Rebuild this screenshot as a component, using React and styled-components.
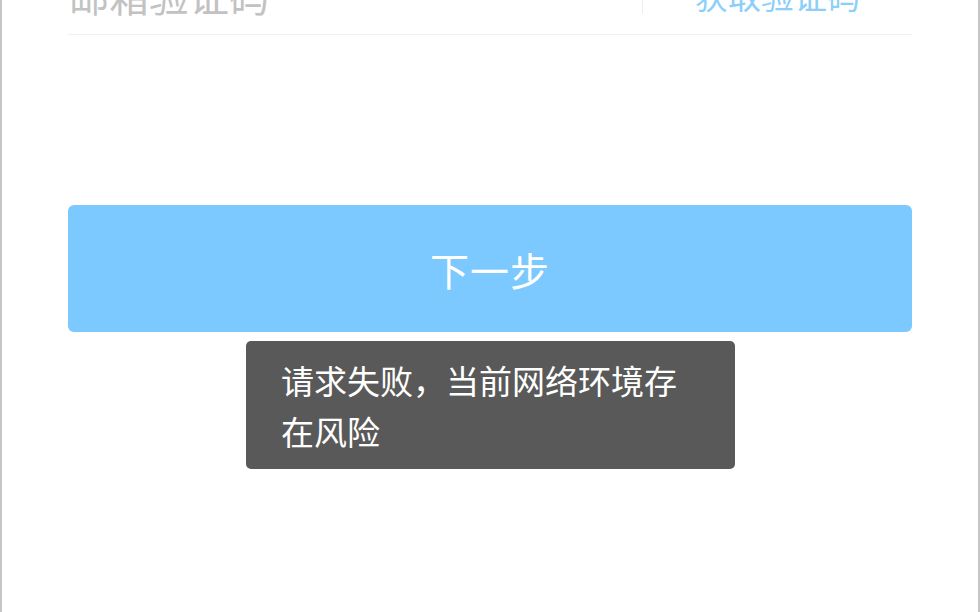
import styled, { createGlobalStyle } from "styled-components";

const GlobalStyle = createGlobalStyle`
  html, body {
    margin: 0;
    padding: 0;
    background: #ffffff;
    overflow: hidden;
  }
  body {
    font-family: "Noto Sans CJK SC", "Noto Sans", sans-serif;
  }
`;

const Frame = styled.div`
  position: relative;
  box-sizing: border-box;
  width: 980px;
  height: 612px;
  overflow: hidden;
  border-left: 2px solid #c6c6c6;
  border-right: 2px solid #c6c6c6;
  padding: 0 66px;
  background: #fff;
`;

const Form = styled.div`
  display: flex;
  flex-direction: column;
  margin-top: -45px;
`;

const InputRow = styled.div`
  display: flex;
  align-items: center;
  height: 79px;
  border-bottom: 1px solid #f0f0f0;
`;

const CodeInput = styled.input`
  flex: 1;
  min-width: 0;
  border: none;
  outline: none;
  padding: 0 0 0 1px;
  background: transparent;
  font-family: inherit;
  font-size: 40px;
  color: #333;

  &::placeholder {
    color: #c2c2c2;
  }
`;

const SendCode = styled.button`
  width: 270px;
  height: 38px;
  border: none;
  border-left: 1px solid #eeeeee;
  background: transparent;
  padding: 0;
  font-family: inherit;
  font-size: 33px;
  line-height: 38px;
  color: #8ccffb;
  cursor: pointer;
`;

const NextButton = styled.button`
  margin-top: 170px;
  height: 127px;
  border: none;
  border-radius: 6px;
  background: #7bc9fe;
  color: #fff;
  font-family: inherit;
  font-size: 39px;
  letter-spacing: 1px;
  cursor: pointer;
`;

const Toast = styled.div`
  position: absolute;
  top: 341px;
  left: 244px;
  box-sizing: border-box;
  width: 489px;
  padding: 14px 30px 12px 35px;
  border-radius: 5px;
  background: #595959;
  color: #fff;
  font-size: 33px;
  line-height: 51px;
`;

export default function App() {
  return (
    <>
      <GlobalStyle />
      <Frame>
        <Form>
          <InputRow>
            <CodeInput placeholder="邮箱验证码" />
            <SendCode>获取验证码</SendCode>
          </InputRow>
          <NextButton>下一步</NextButton>
        </Form>
        <Toast>请求失败，当前网络环境存在风险</Toast>
      </Frame>
    </>
  );
}
